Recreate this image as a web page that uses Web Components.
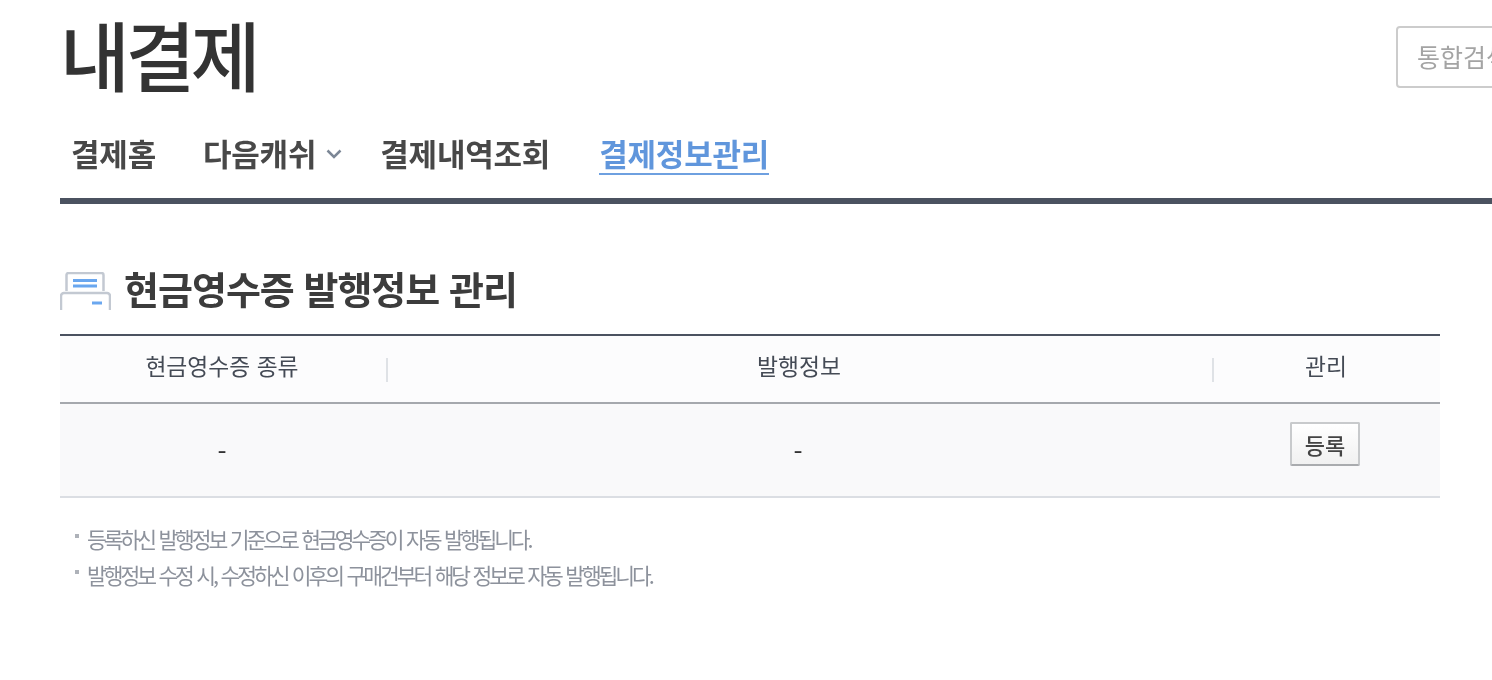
<!DOCTYPE html>
<html lang="ko">
<head>
<meta charset="utf-8">
<title>내결제</title>
<style>
  html, body { margin: 0; background: #fff; }
  body { width: 1492px; height: 680px; overflow: hidden; font-family: "Noto Sans CJK KR", "Noto Sans", sans-serif; filter: blur(.5px); }
</style>
</head>
<body>
<pay-header title-text="내결제" search="통합검색"></pay-header>
<pay-nav>
  <nav-tab>결제홈</nav-tab>
  <nav-tab caret>다음캐쉬</nav-tab>
  <nav-tab>결제내역조회</nav-tab>
  <nav-tab active>결제정보관리</nav-tab>
</pay-nav>
<section-title>현금영수증 발행정보 관리</section-title>
<info-table></info-table>
<note-list>
  <li>등록하신 발행정보 기준으로 현금영수증이 자동 발행됩니다.</li>
  <li>발행정보 수정 시, 수정하신 이후의 구매건부터 해당 정보로 자동 발행됩니다.</li>
</note-list>

<script>
class PayHeader extends HTMLElement {
  constructor() {
    super();
    this.attachShadow({mode: 'open'});
    this.shadowRoot.innerHTML = `
    <style>
      :host { display: flex; justify-content: space-between; align-items: flex-start; height: 120px; padding-left: 60px; box-sizing: border-box; width: 1492px; }
      h1 { margin: 0; font-size: 76px; line-height: 106px; font-weight: 500; letter-spacing: -4.5px; color: #333; }
      .search { flex: none; width: 300px; height: 62px; margin: 26px -204px 0 0; box-sizing: border-box; border: 2px solid #ccc; border-radius: 4px; padding-left: 19px; font-size: 25px; line-height: 56px; color: #a4a4a4; }
    </style>
    <h1></h1><div class="search"></div>`;
    this.shadowRoot.querySelector('h1').innerText = this.getAttribute('title-text');
    this.shadowRoot.querySelector('.search').innerText = this.getAttribute('search');
  }
}

class PayNav extends HTMLElement {
  constructor() {
    super();
    this.attachShadow({mode: 'open'});
    this.shadowRoot.innerHTML = `
    <style>
      :host { display: flex; margin-left: 60px; height: 84px; box-sizing: border-box; border-bottom: 6px solid #4b5260; padding-left: 11px; gap: 47px; }
    </style>
    <slot></slot>`;
  }
}

class NavTab extends HTMLElement {
  constructor() {
    super();
    this.attachShadow({mode: 'open'});
    this.shadowRoot.innerHTML = `
    <style>
      :host { display: flex; align-items: flex-start; font-size: 31px; font-weight: 700; letter-spacing: -.2px; color: #484848; }
      :host([active]) { margin-left: 2px; }
      span { display: block; line-height: 40px; height: 42px; margin-top: 13px; }
      :host([active]) span { color: #6096dc; border-bottom: 2px solid #6ea0e0; height: 40px; }
      svg { display: none; margin: 29px -9px 0 10px; }
      :host([caret]) svg { display: block; }
    </style>
    <span><slot></slot></span>
    <svg width="16" height="10" viewBox="0 0 16 10"><path d="M1.500 1.500 8 8l6.500-6.500" fill="none" stroke="#7c8796" stroke-width="2.500"/></svg>`;
  }
}

class SectionTitle extends HTMLElement {
  constructor() {
    super();
    this.attachShadow({mode: 'open'});
    this.shadowRoot.innerHTML = `
    <style>
      :host { display: flex; align-items: flex-end; margin: 62px 0 0 60px; height: 44px; font-size: 38px; font-weight: 700; letter-spacing: -1px; color: #3c3c3c; gap: 13px; }
      svg { flex: none; }
      span { line-height: 44px; }
    </style>
    <svg width="51" height="38" viewBox="0 0 51 38">
      <path d="M6.500 19V3a2 2 0 0 1 2-2h33a2 2 0 0 1 2 2v16" fill="#fff" stroke="#c3c9d2" stroke-width="2.500"/>
      <path d="M1 38V24a3 3 0 0 1 3-3h43a3 3 0 0 1 3 3v14" fill="#fff" stroke="#c3c9d2" stroke-width="2.500"/>
      <path d="M13 8.500h24M13 14h24" stroke="#6aa7ef" stroke-width="3"/>
      <path d="M32 31h10" stroke="#6aa7ef" stroke-width="3"/>
    </svg>
    <span><slot></slot></span>`;
  }
}

class InfoTable extends HTMLElement {
  constructor() {
    super();
    this.attachShadow({mode: 'open'});
    this.shadowRoot.innerHTML = `
    <style>
      :host { display: block; margin: 24px 0 0 60px; width: 1380px; font-size: 22.800px; color: #444a55; }
      .row { display: grid; grid-template-columns: 326px 826px 228px; align-items: center; text-align: center; }
      .row div { padding-right: 2px; }
      .head { height: 70px; box-sizing: border-box; background: #fcfcfd; border-top: 2px solid #4b5260; border-bottom: 2px solid #a5a8ad; }
      .head div { height: 24px; margin-top: 1px; }
      .head div + div { border-left: 2px solid #dfe2e6; }
      .head span { display: block; line-height: 24px; margin-top: -4px; }
      .body { height: 94px; box-sizing: border-box; background: #f9f9fa; border-bottom: 2px solid #dbdee3; color: #333; font-size: 26px; }
      button { display: block; margin: 0 auto 12px; width: 70px; height: 44px; padding: 0; font: inherit; font-size: 22px; font-weight: 500; color: #444; border: 2px solid #c8cacc; border-bottom-color: #a9abae; border-radius: 2px; background: linear-gradient(#fff, #f1f1f1); }
    </style>
    <div class="row head"><div><span>현금영수증 종류</span></div><div><span>발행정보</span></div><div><span>관리</span></div></div>
    <div class="row body"><div>-</div><div>-</div><div><button>등록</button></div></div>`;
  }
}

class NoteList extends HTMLElement {
  constructor() {
    super();
    this.attachShadow({mode: 'open'});
    this.shadowRoot.innerHTML = `
    <style>
      :host { display: block; margin: 23px 0 0 60px; }
      ::slotted(li) { display: block; height: 36px; line-height: 36px; padding-left: 27px; font-size: 21.500px; letter-spacing: -3.050px; word-spacing: 1.500px; color: #8d929c; background: linear-gradient(#aeb2b9, #aeb2b9) 15px 13px / 4px 4px no-repeat; }
    </style>
    <slot></slot>`;
  }
}

window.customElements.define('pay-header', PayHeader);
window.customElements.define('pay-nav', PayNav);
window.customElements.define('nav-tab', NavTab);
window.customElements.define('section-title', SectionTitle);
window.customElements.define('info-table', InfoTable);
window.customElements.define('note-list', NoteList);
</script>
</body>
</html>
